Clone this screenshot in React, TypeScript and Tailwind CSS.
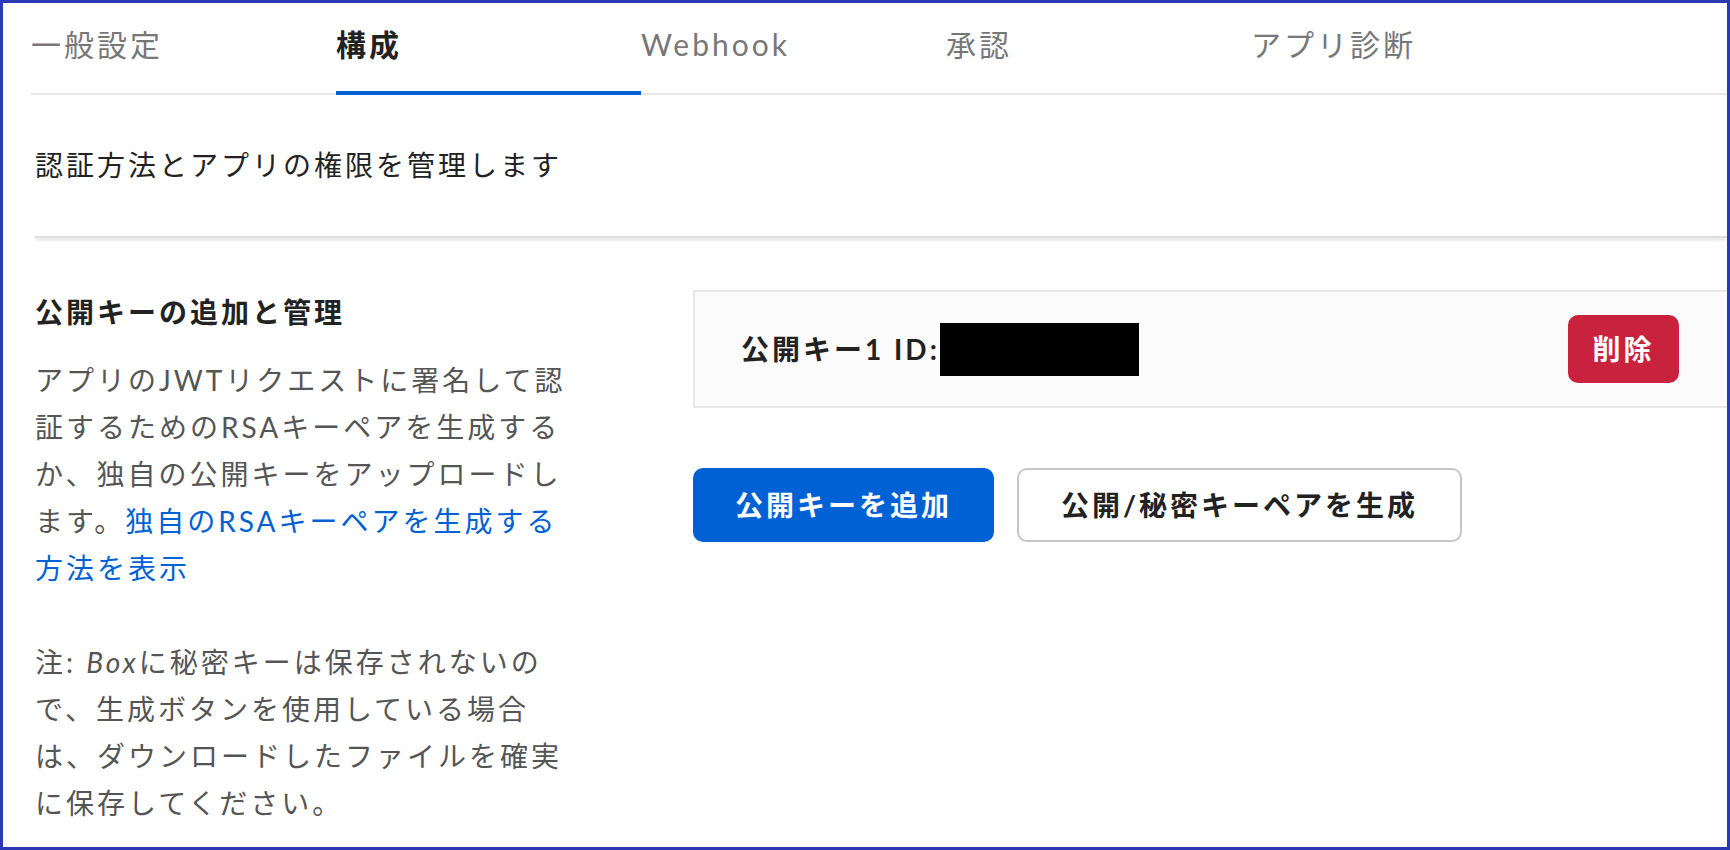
const tabs = [
  { label: "一般設定", active: false },
  { label: "構成", active: true },
  { label: "Webhook", active: false },
  { label: "承認", active: false },
  { label: "アプリ診断", active: false },
];

export default function App() {
  return (
    <div className="w-[1730px] h-[850px] overflow-hidden border-[3px] border-[#2b39b2] bg-white font-['Lato','Noto_Sans_CJK_JP',sans-serif]">
      {/* Tabs */}
      <nav className="ml-[28px] flex border-b-2 border-[#e8e8e8]">
        {tabs.map((tab) => (
          <button
            key={tab.label}
            className={
              tab.active
                ? "w-[305px] -mb-[2px] border-b-4 border-[#0061d5] pt-[21px] pb-[27px] text-left text-[30px] leading-[40px] tracking-[3px] font-bold text-[#222]"
                : "w-[305px] -mb-[2px] border-b-4 border-transparent pt-[21px] pb-[27px] text-left text-[30px] leading-[40px] tracking-[3px] text-[#777]"
            }
          >
            {tab.label}
          </button>
        ))}
      </nav>

      <div className="pl-[32px]">
        <p className="mt-[46px] text-[28px] leading-[48px] tracking-[3px] text-[#222]">
          認証方法とアプリの権限を管理します
        </p>

        <div className="mt-[47px] h-[2px] bg-[#dedede] shadow-[0_2px_3px_rgba(0,0,0,0.15)]" />

        <div className="mt-[50px] flex items-start">
          {/* Left: description */}
          <div className="w-[658px] shrink-0">
            <h3 className="text-[28px] leading-[48px] tracking-[3px] font-bold text-[#222]">
              公開キーの追加と管理
            </h3>
            <p className="mt-[21px] whitespace-nowrap text-[28px] leading-[47px] tracking-[3px] text-[#555]">
              アプリのJWTリクエストに署名して認
              <br />
              証するためのRSAキーペアを生成する
              <br />
              か、独自の公開キーをアップロードし
              <br />
              ます。
              <a href="#" className="text-[#0061d5]">
                独自のRSAキーペアを生成する
                <br />
                方法を表示
              </a>
            </p>
            <p className="mt-[47px] whitespace-nowrap text-[28px] leading-[47px] tracking-[3px] text-[#555]">
              注: <i>Box</i>に秘密キーは保存されないの
              <br />
              で、生成ボタンを使用している場合
              <br />
              は、ダウンロードしたファイルを確実
              <br />
              に保存してください。
            </p>
          </div>

          {/* Right: keys */}
          <div className="flex-1 pt-[2px]">
            <div className="flex h-[118px] items-center justify-between border-2 border-r-0 border-[#e8e8e8] bg-[#fbfbfb] pl-[46px] pr-[48px]">
              <div className="flex items-center">
                <span className="text-[28px] tracking-[3px] font-bold text-[#222]">公開キー1 ID:</span>
                <span className="h-[53px] w-[199px] bg-black" />
              </div>
              <button className="h-[68px] w-[111px] rounded-[10px] bg-[#c8223f] text-[28px] tracking-[3px] font-bold text-white">
                削除
              </button>
            </div>

            <div className="mt-[60px] flex gap-[23px]">
              <button className="h-[74px] w-[301px] rounded-[10px] bg-[#0061d5] text-[28px] tracking-[3px] font-bold text-white">
                公開キーを追加
              </button>
              <button className="h-[74px] w-[445px] rounded-[10px] border-2 border-[#c6c6c6] bg-white text-[28px] tracking-[3px] font-bold text-[#222]">
                公開/秘密キーペアを生成
              </button>
            </div>
          </div>
        </div>
      </div>
    </div>
  );
}
